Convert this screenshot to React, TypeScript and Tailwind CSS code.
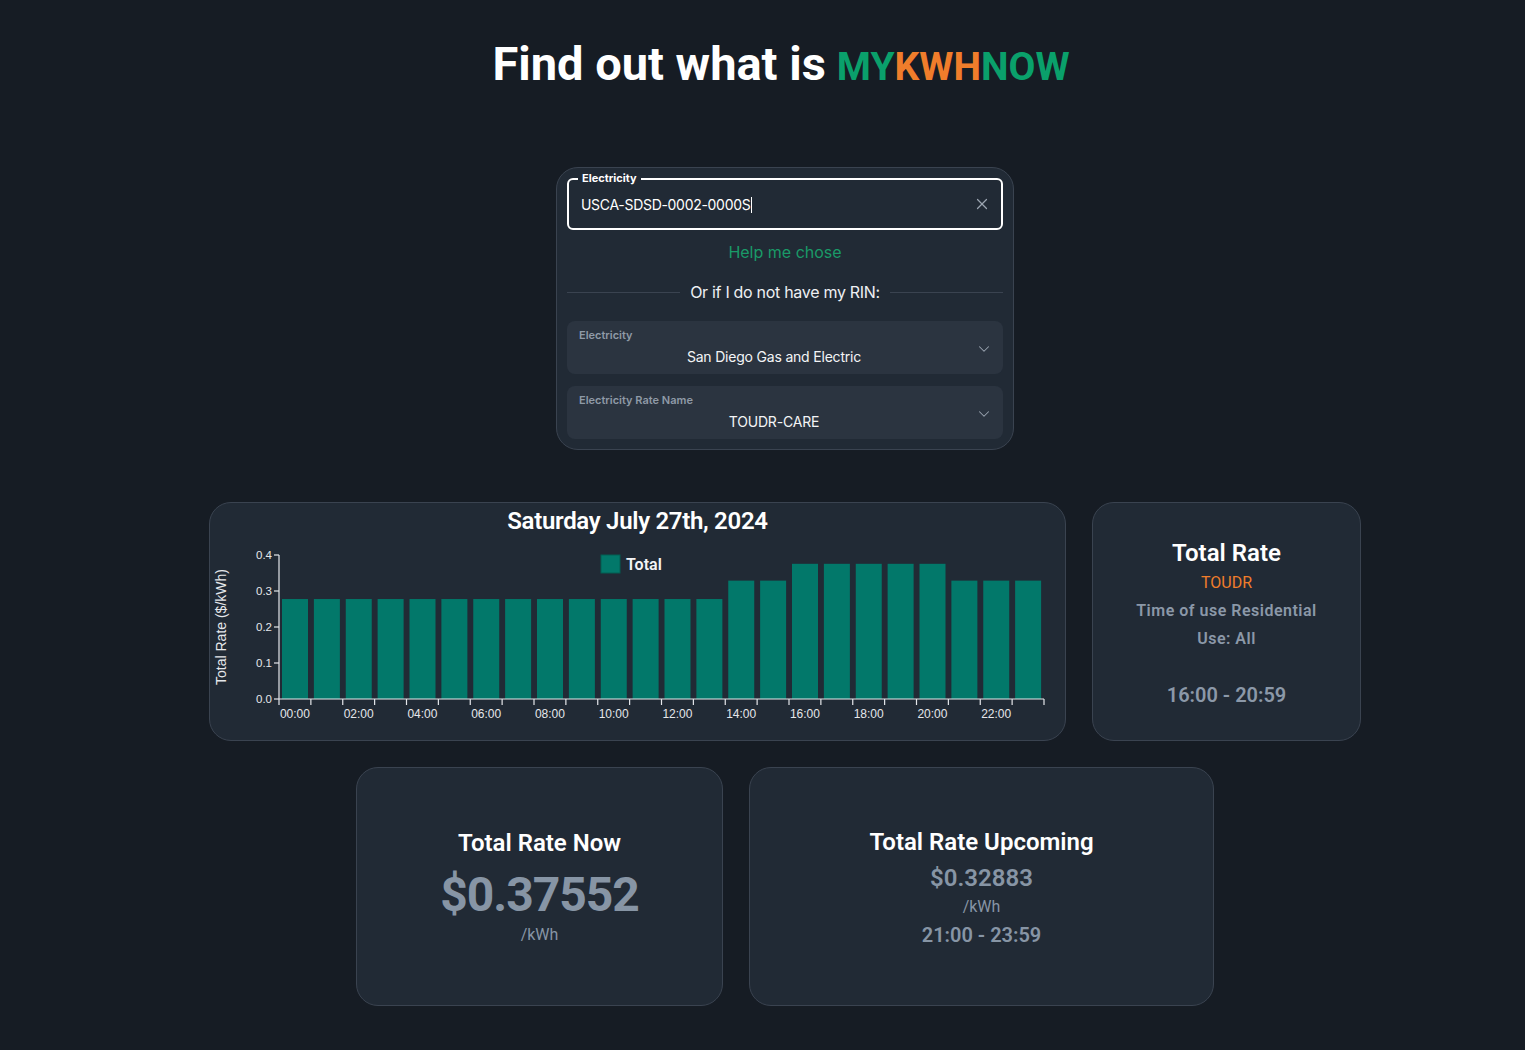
import React from "react";
import { X, ChevronDown } from "lucide-react";

const values: number[] = [
  0.27768, 0.27768, 0.27768, 0.27768, 0.27768, 0.27768, 0.27768, 0.27768,
  0.27768, 0.27768, 0.27768, 0.27768, 0.27768, 0.27768, 0.32883, 0.32883,
  0.37552, 0.37552, 0.37552, 0.37552, 0.37552, 0.32883, 0.32883, 0.32883,
];

function Chart() {
  const x0 = 69;
  const x1 = 834;
  const yTop = 18;
  const y0 = 162;
  const scale = 360;
  const step = (x1 - x0) / 24;
  return (
    <svg width={854} height={203} className="block">
      <text
        transform="translate(16,90) rotate(-90)"
        textAnchor="middle"
        fill="#e5e7eb"
        fontSize="14"
        fontFamily="'Liberation Sans', Arial, sans-serif"
      >
        Total Rate ($/kWh)
      </text>
      {values.map((v, i) => {
        const h = v * scale;
        return (
          <rect
            key={i}
            x={x0 + i * step + 3}
            y={y0 - h}
            width={26}
            height={h}
            fill="#02786a"
          />
        );
      })}
      <line x1={x0} y1={yTop} x2={x0} y2={y0} stroke="#e5e7eb" strokeWidth={1.2} />
      {[0, 0.1, 0.2, 0.3, 0.4].map((t) => {
        const y = y0 - t * scale;
        return (
          <g key={t}>
            <line x1={x0 - 5} y1={y} x2={x0} y2={y} stroke="#e5e7eb" strokeWidth={1.2} />
            <text
              x={x0 - 7}
              y={y + 4}
              textAnchor="end"
              fill="#e5e7eb"
              fontSize="11.5"
              fontFamily="'Liberation Sans', Arial, sans-serif"
            >
              {t.toFixed(1)}
            </text>
          </g>
        );
      })}
      <line x1={x0} y1={y0} x2={x1} y2={y0} stroke="#e5e7eb" strokeWidth={1.2} />
      {Array.from({ length: 25 }).map((_, i) => (
        <line
          key={i}
          x1={x0 + i * step}
          y1={y0}
          x2={x0 + i * step}
          y2={y0 + 6}
          stroke="#e5e7eb"
          strokeWidth={1.2}
        />
      ))}
      {Array.from({ length: 12 }).map((_, k) => {
        const i = k * 2;
        return (
          <text
            key={i}
            x={x0 + i * step + step / 2}
            y={y0 + 19}
            textAnchor="middle"
            fill="#e5e7eb"
            fontSize="12"
            fontFamily="'Liberation Sans', Arial, sans-serif"
          >
            {String(i).padStart(2, "0")}:00
          </text>
        );
      })}
      <rect x={391} y={18} width={19} height={18} fill="#02786a" stroke="#035e53" strokeWidth={1} />
      <text
        x={416}
        y={33}
        fill="#f3f4f6"
        fontSize="16"
        fontWeight={600}
        fontFamily="Roboto, sans-serif"
      >
        Total
      </text>
    </svg>
  );
}

function SelectBox({ label, value }: { label: string; value: string }) {
  return (
    <div className="relative h-[53px] rounded-lg bg-[#2b3440] pl-3 pr-[34px] pt-[7px]">
      <div className="text-[11px] font-semibold leading-[14px] text-[#8f9aa7]">{label}</div>
      <div className="mt-[6px] text-center text-[14px] leading-[18px] tracking-[-0.2px] text-[#f3f4f6]">{value}</div>
      <ChevronDown
        className="absolute right-[10px] top-[19px] text-[#9aa4b0]"
        size={18}
        strokeWidth={1.4}
      />
    </div>
  );
}

export default function App() {
  return (
    <div
      className="min-h-[1050px] w-full bg-[#161c24] pl-[45px] pt-[36px] text-white"
      style={{ fontFamily: "Inter, 'Noto Sans', sans-serif" }}
    >
      <h1
        className="flex items-baseline justify-center pr-[8px] leading-[56px]"
        style={{ fontFamily: "Roboto, sans-serif" }}
      >
        <span className="text-[47px] font-bold">Find out what is</span>
        <span className="ml-[11px] text-[39px] font-bold">
          <span className="text-[#0aa06b]">MY</span>
          <span className="text-[#f07d2b]">KWH</span>
          <span className="text-[#0aa06b]">NOW</span>
        </span>
      </h1>

      <div className="mx-auto mt-[72px] w-[458px] rounded-[22px] border border-[#3a4350] bg-[#212a35] px-[10px] pb-[10px] pt-[10px]">
        <div className="relative h-[52px] rounded-[6px] border-2 border-white pl-3 pr-[10px]">
          <span className="absolute -top-[9px] left-[9px] bg-[#212a35] px-[4px] text-[11px] font-bold leading-[14px] text-white">
            Electricity
          </span>
          <div className="flex h-full items-center justify-between">
            <span className="text-[14px] tracking-[-0.3px] text-white">
              USCA-SDSD-0002-0000S<span className="ml-[1px] inline-block h-[16px] w-px translate-y-[3px] bg-white" />
            </span>
            <X size={18} className="text-[#9aa4b0]" strokeWidth={1.6} />
          </div>
        </div>
        <div className="mt-[10px] text-center text-[16px] leading-[24px] text-[#1a9a68]">Help me chose</div>
        <div className="mt-[16px] flex items-center gap-[10px]">
          <div className="h-px flex-1 bg-[#3a4350]" />
          <span className="text-[16px] leading-[24px] tracking-[-0.3px] text-[#eef0f3]">Or if I do not have my RIN:</span>
          <div className="h-px flex-1 bg-[#3a4350]" />
        </div>
        <div className="mt-[17px] flex flex-col gap-[12px]">
          <SelectBox label="Electricity" value="San Diego Gas and Electric" />
          <SelectBox label="Electricity Rate Name" value="TOUDR-CARE" />
        </div>
      </div>

      <div className="mt-[52px] flex justify-center gap-[26px]" style={{ fontFamily: "Roboto, sans-serif" }}>
        <div className="h-[239px] w-[857px] rounded-[22px] border border-[#3a4350] bg-[#212a35]">
          <div className="mt-[2px] text-center text-[24px] font-semibold leading-[32px] tracking-[-0.3px] text-white">
            Saturday July 27th, 2024
          </div>
          <Chart />
        </div>
        <div className="flex h-[239px] w-[269px] flex-col items-center rounded-[22px] border border-[#3a4350] bg-[#212a35] pt-[35px]">
          <div className="text-[24px] font-semibold leading-[30px] text-white">Total Rate</div>
          <div className="mt-[3px] text-[16px] leading-[24px] text-[#f07d2b]">TOUDR</div>
          <div className="mt-[4px] text-[16px] font-semibold leading-[24px] tracking-[0.5px] text-[#8b98a8]">Time of use Residential</div>
          <div className="mt-[4px] text-[16px] font-semibold leading-[24px] tracking-[0.5px] text-[#8b98a8]">Use: All</div>
          <div className="mt-[30px] text-[20px] font-semibold leading-[28px] text-[#8b98a8]">16:00 - 20:59</div>
        </div>
      </div>

      <div className="mt-[26px] flex justify-center gap-[26px]" style={{ fontFamily: "Roboto, sans-serif" }}>
        <div className="flex h-[239px] w-[367px] flex-col items-center justify-center rounded-[22px] border border-[#3a4350] bg-[#212a35] pt-[2px]">
          <div className="mb-[9px] text-[24px] font-semibold leading-[30px] text-white">Total Rate Now</div>
          <div className="text-[48px] font-bold leading-[56px] tracking-[-1px] text-[#8795a5]">$0.37552</div>
          <div className="text-[16px] leading-[24px] text-[#8795a5]">/kWh</div>
        </div>
        <div className="flex h-[239px] w-[465px] flex-col items-center justify-center rounded-[22px] border border-[#3a4350] bg-[#212a35] pt-[2px]">
          <div className="text-[24px] font-semibold leading-[30px] text-white">Total Rate Upcoming</div>
          <div className="mt-[6px] text-[24px] font-semibold leading-[30px] text-[#8795a5]">$0.32883</div>
          <div className="mt-[1px] text-[16px] leading-[26px] text-[#8795a5]">/kWh</div>
          <div className="mt-[1px] text-[20px] font-semibold leading-[28px] text-[#8795a5]">21:00 - 23:59</div>
        </div>
      </div>
    </div>
  );
}
